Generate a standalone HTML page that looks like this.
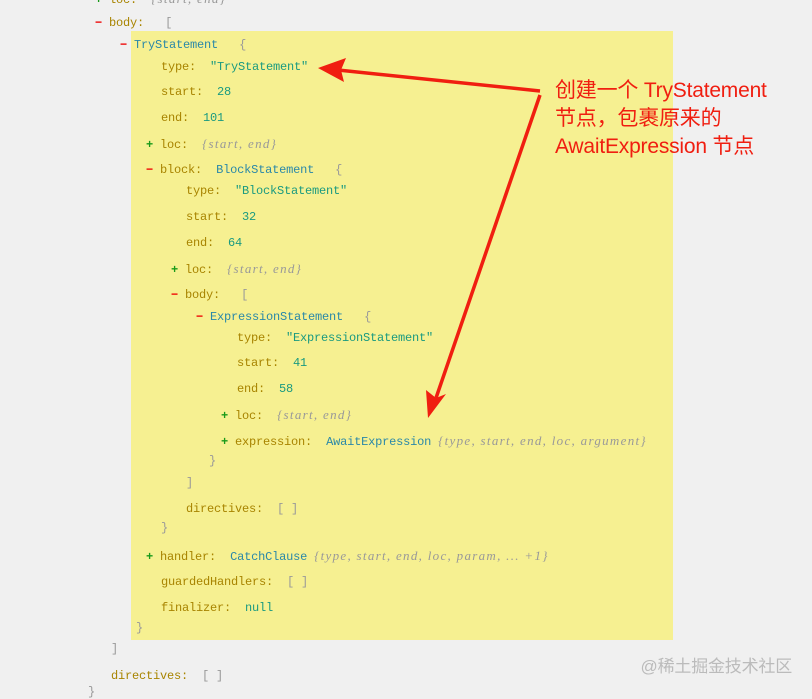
<!DOCTYPE html>
<html><head><meta charset="utf-8"><style>
body{margin:0;width:812px;height:692px;background:#f0f0f0;position:relative;overflow:hidden;font-family:"Liberation Mono",monospace;font-size:12px;letter-spacing:-0.2px}
.l{position:absolute;white-space:pre;line-height:14px;margin-top:1px}
.k{color:#a88400}.v{color:#1a9a80}.t{color:#2a88a8}.p{color:#999;font-style:italic;font-family:"Liberation Serif",serif;font-size:13px;letter-spacing:1.3px}
.m{color:#e00;font-weight:bold}.a{color:#1a9a1a;font-weight:bold}.g{color:#999}
#y{position:absolute;left:131px;top:31px;width:542px;height:609px;background:#f6f091}
.c{position:absolute;left:555px;color:#f01e10;font-family:"Liberation Sans","Noto Sans CJK SC",sans-serif;font-size:21px;line-height:28px;top:77px}
.w{position:absolute;right:20px;top:652px;color:#bbb;font-family:"Liberation Sans","Noto Sans CJK SC",sans-serif;font-size:17px}
</style></head><body>
<div id="y"></div>
<div class="l" style="left:95px;top:-9px"><span class="a">+</span> <span class="k">loc:</span>  <span class="p">{start, end}</span></div>
<div class="l" style="left:95px;top:15px"><span class="m">−</span> <span class="k">body:</span>   <span class="g">[</span></div>
<div class="l" style="left:120px;top:37px"><span class="m">−</span> <span class="t">TryStatement</span>   <span class="g">{</span></div>
<div class="l" style="left:161px;top:59px"><span class="k">type:</span>  <span class="v">"TryStatement"</span></div>
<div class="l" style="left:161px;top:84px"><span class="k">start:</span>  <span class="v">28</span></div>
<div class="l" style="left:161px;top:110px"><span class="k">end:</span>  <span class="v">101</span></div>
<div class="l" style="left:146px;top:136px"><span class="a">+</span> <span class="k">loc:</span>  <span class="p">{start, end}</span></div>
<div class="l" style="left:146px;top:162px"><span class="m">−</span> <span class="k">block:</span>  <span class="t">BlockStatement</span>   <span class="g">{</span></div>
<div class="l" style="left:186px;top:183px"><span class="k">type:</span>  <span class="v">"BlockStatement"</span></div>
<div class="l" style="left:186px;top:209px"><span class="k">start:</span>  <span class="v">32</span></div>
<div class="l" style="left:186px;top:235px"><span class="k">end:</span>  <span class="v">64</span></div>
<div class="l" style="left:171px;top:261px"><span class="a">+</span> <span class="k">loc:</span>  <span class="p">{start, end}</span></div>
<div class="l" style="left:171px;top:287px"><span class="m">−</span> <span class="k">body:</span>   <span class="g">[</span></div>
<div class="l" style="left:196px;top:309px"><span class="m">−</span> <span class="t">ExpressionStatement</span>   <span class="g">{</span></div>
<div class="l" style="left:237px;top:330px"><span class="k">type:</span>  <span class="v">"ExpressionStatement"</span></div>
<div class="l" style="left:237px;top:355px"><span class="k">start:</span>  <span class="v">41</span></div>
<div class="l" style="left:237px;top:381px"><span class="k">end:</span>  <span class="v">58</span></div>
<div class="l" style="left:221px;top:407px"><span class="a">+</span> <span class="k">loc:</span>  <span class="p">{start, end}</span></div>
<div class="l" style="left:221px;top:433px"><span class="a">+</span> <span class="k">expression:</span>  <span class="t">AwaitExpression</span> <span class="p">{type, start, end, loc, argument}</span></div>
<div class="l g" style="left:209px;top:453px">}</div>
<div class="l g" style="left:186px;top:475px">]</div>
<div class="l" style="left:186px;top:501px"><span class="k">directives:</span>  <span class="g">[ ]</span></div>
<div class="l g" style="left:161px;top:520px">}</div>
<div class="l" style="left:146px;top:548px"><span class="a">+</span> <span class="k">handler:</span>  <span class="t">CatchClause</span> <span class="p">{type, start, end, loc, param, ... +1}</span></div>
<div class="l" style="left:161px;top:574px"><span class="k">guardedHandlers:</span>  <span class="g">[ ]</span></div>
<div class="l" style="left:161px;top:600px"><span class="k">finalizer:</span>  <span class="v">null</span></div>
<div class="l g" style="left:136px;top:620px">}</div>
<div class="l g" style="left:111px;top:641px">]</div>
<div class="l" style="left:111px;top:668px"><span class="k">directives:</span>  <span class="g">[ ]</span></div>
<div class="l g" style="left:88px;top:684px">}</div>
<svg style="position:absolute;left:0;top:0" width="812" height="692">
<path d="M540 91 L338 70" stroke="#f01e10" stroke-width="3.5" fill="none"/>
<polygon points="318,68 346,58 341,70 344,82" fill="#f01e10"/>
<path d="M540 95 L436 398" stroke="#f01e10" stroke-width="3.5" fill="none"/>
<polygon points="428,418 426,390 436,398 446,394" fill="#f01e10"/>
</svg>
<div class="c">创建一个 TryStatement<br>节点，包裹原来的<br>AwaitExpression 节点</div>
<div class="w">@稀土掘金技术社区</div>
</body></html>
